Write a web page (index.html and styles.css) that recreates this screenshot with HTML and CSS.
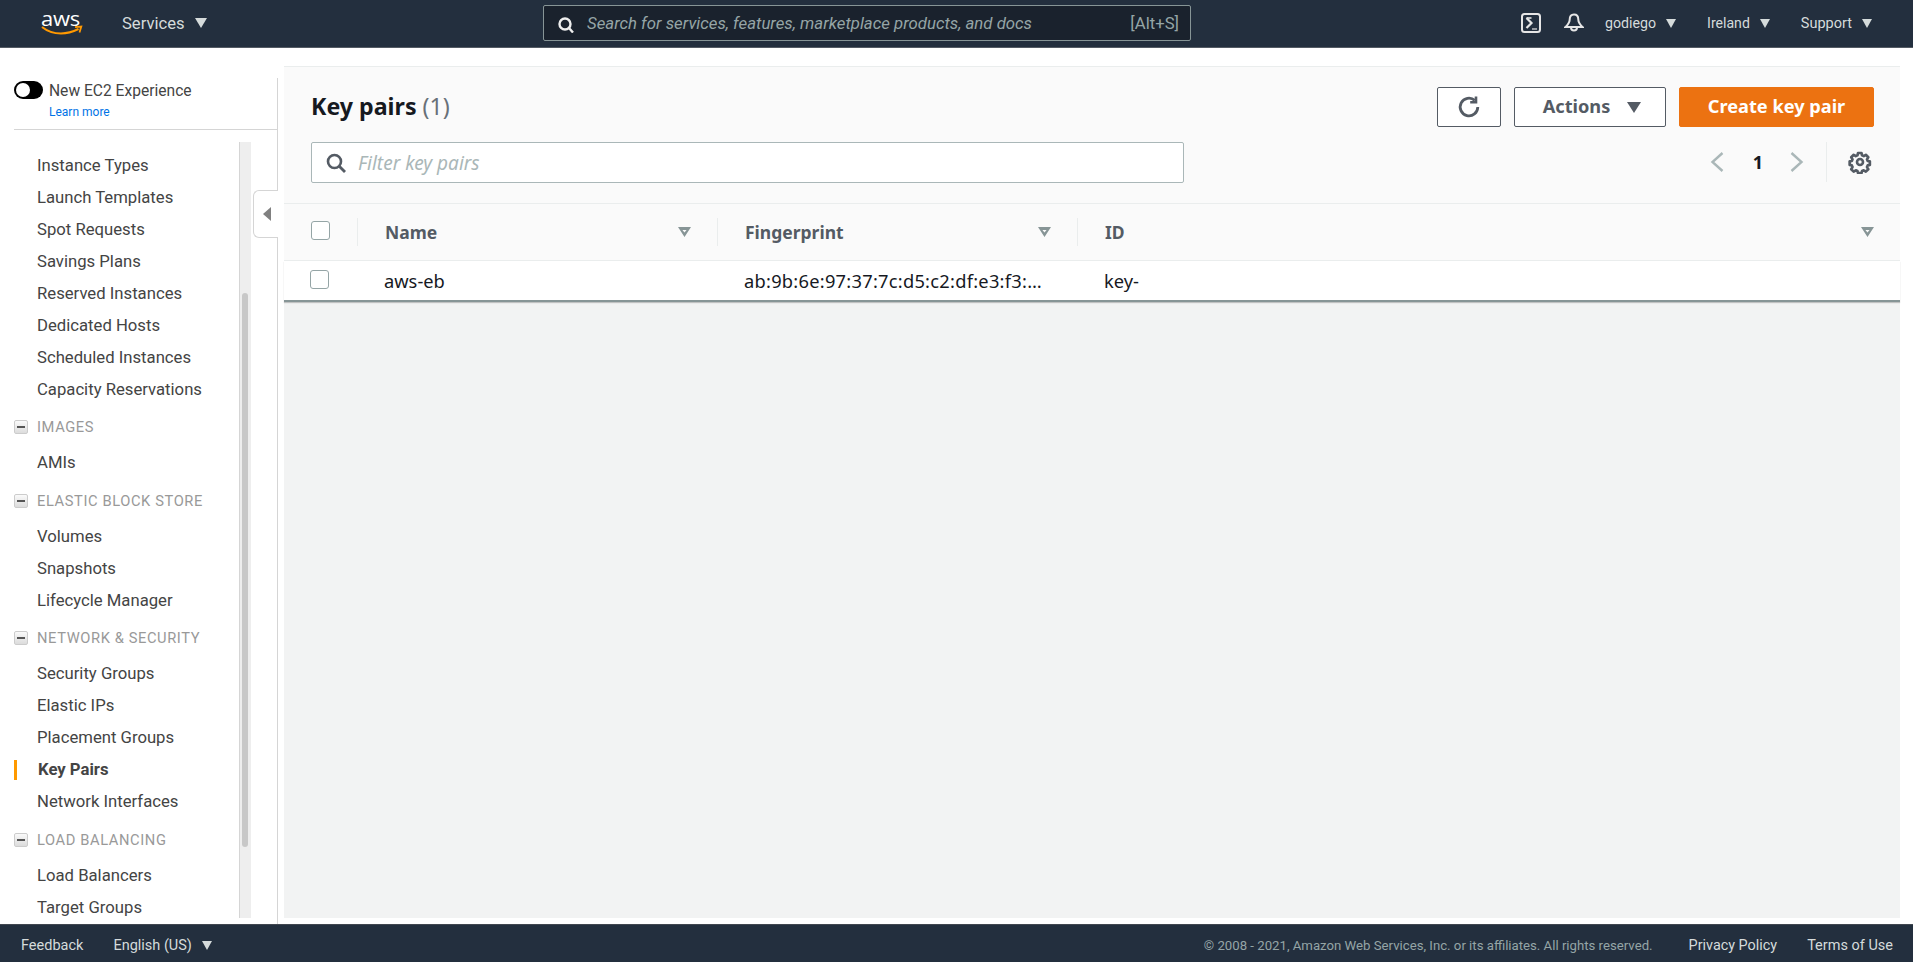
FILE: index.html
```html
<!DOCTYPE html>
<html lang="en">
<head>
<meta charset="utf-8">
<title>Key pairs | EC2 Management Console</title>
<link rel="stylesheet" href="styles.css">
</head>
<body>
<header class="topnav">
  <svg class="logo" viewBox="0 0 42 12" width="42" height="12"><path d="M1 2c5 4 11 6.500 19 6.500 6 0 12-1.800 17.500-4.500" fill="none" stroke="#f90" stroke-width="2"/><path d="M34 2.200l6.300-.7-1.800 6" fill="none" stroke="#f90" stroke-width="1.800"/></svg>
  <span class="logo-text">aws</span>
  <span class="nav-services">Services</span><i class="caret caret-lg"></i>
  <div class="omni">
    <svg class="omni-icon" viewBox="0 0 16 16" width="16" height="16"><circle cx="7" cy="7" r="5.500" fill="none" stroke="#eee" stroke-width="2.400"/><path d="M10.500 10.500L15 15.500" stroke="#eee" stroke-width="2.400"/></svg>
    <span class="omni-text">Search for services, features, marketplace products, and docs</span>
    <span class="omni-key">[Alt+S]</span>
  </div>
  <div class="nav-right">
    <svg class="nav-icon" viewBox="0 0 20 20" width="20" height="20"><rect x="1" y="1" width="18" height="18" rx="2.500" fill="none" stroke="#e6e6e6" stroke-width="2"/><path d="M5.500 5l5 5-5 5" fill="none" stroke="#e6e6e6" stroke-width="2.200"/><path d="M5.500 5h5" stroke="#e6e6e6" stroke-width="1.600"/><path d="M11 16h5" stroke="#e6e6e6" stroke-width="1.200"/></svg>
    <svg class="nav-icon bell" viewBox="0 0 20 20" width="20" height="20"><path d="M10 1.500c-3 0-4.300 2.500-4.300 5 0 3.500-1.700 5-4.200 7.500h17c-2.500-2.500-4.200-4-4.200-7.500 0-2.500-1.300-5-4.300-5z" fill="none" stroke="#e6e6e6" stroke-width="2"/><path d="M7 14.500a3 3 0 0 0 6 0" fill="none" stroke="#e6e6e6" stroke-width="2"/></svg>
    <span class="nav-item user">godiego</span><i class="caret"></i>
    <span class="nav-item region">Ireland</span><i class="caret"></i>
    <span class="nav-item support">Support</span><i class="caret"></i>
  </div>
</header>

<div class="body-row">
  <aside class="sidebar">
    <div class="exp">
      <span class="toggle"><span class="knob"></span></span>
      <div>
        <div class="exp-title">New EC2 Experience</div>
        <a class="exp-link">Learn more</a>
      </div>
    </div>
    <div class="side-scroll">
      <nav class="side-list">
        <a class="item">Instance Types</a>
        <a class="item">Launch Templates</a>
        <a class="item">Spot Requests</a>
        <a class="item">Savings Plans</a>
        <a class="item">Reserved Instances</a>
        <a class="item">Dedicated Hosts</a>
        <a class="item">Scheduled Instances</a>
        <a class="item">Capacity Reservations</a>
        <div class="group"><span class="minus"></span>IMAGES</div>
        <a class="item">AMIs</a>
        <div class="group"><span class="minus"></span>ELASTIC BLOCK STORE</div>
        <a class="item">Volumes</a>
        <a class="item">Snapshots</a>
        <a class="item">Lifecycle Manager</a>
        <div class="group"><span class="minus"></span>NETWORK &amp; SECURITY</div>
        <a class="item">Security Groups</a>
        <a class="item">Elastic IPs</a>
        <a class="item">Placement Groups</a>
        <a class="item active">Key Pairs</a>
        <a class="item">Network Interfaces</a>
        <div class="group"><span class="minus"></span>LOAD BALANCING</div>
        <a class="item">Load Balancers</a>
        <a class="item">Target Groups</a>
      </nav>
      <div class="track"><div class="thumb"></div></div>
    </div>
    <div class="collapse"><i class="collapse-arrow"></i></div>
  </aside>

  <main class="content">
    <section class="panel">
      <div class="panel-head">
        <div class="title-row">
          <h1 class="title">Key pairs <span class="count">(1)</span></h1>
          <div class="actions">
            <button class="btn btn-icon"><svg viewBox="0 0 24 24" width="24" height="24"><path d="M20.800 12a8.800 8.800 0 1 1-3-6.600" fill="none" stroke="#545b64" stroke-width="2.800"/><path d="M19 1.500v5.800h-5.800" fill="none" stroke="#545b64" stroke-width="2.600"/></svg></button>
            <button class="btn btn-actions">Actions<i class="caret-dark"></i></button>
            <button class="btn btn-primary">Create key pair</button>
          </div>
        </div>
        <div class="filter-row">
          <div class="filter">
            <svg viewBox="0 0 20 20" width="20" height="20"><circle cx="8.500" cy="8.500" r="6.500" fill="none" stroke="#545b64" stroke-width="2.600"/><path d="M13 13l6 6" stroke="#545b64" stroke-width="2.800"/></svg>
            <span class="filter-text">Filter key pairs</span>
          </div>
          <div class="pager">
            <svg class="chev" viewBox="0 0 14 20" width="14" height="20"><path d="M12.500 1L2.500 10l10 9" fill="none" stroke="#aab7b8" stroke-width="2.400"/></svg>
            <span class="page">1</span>
            <svg class="chev" viewBox="0 0 14 20" width="14" height="20"><path d="M1.500 1l10 9-10 9" fill="none" stroke="#aab7b8" stroke-width="2.400"/></svg>
            <span class="pager-sep"></span>
            <svg class="gear" viewBox="0 0 24 24" width="24" height="24"><circle cx="12" cy="12" r="3" fill="none" stroke="#545b64" stroke-width="2.600"/><path d="M10 2.500h4l.6 2.700 1.900.8 2.400-1.500 2.800 2.800-1.500 2.400.8 1.900 2.500.4v4l-2.500.6-.8 1.900 1.500 2.400-2.800 2.800-2.400-1.500-1.900.8-.6 2.300h-4l-.6-2.300-1.900-.8-2.400 1.500-2.800-2.800 1.500-2.400-.8-1.900-2.500-.6v-4l2.500-.4.8-1.900-1.500-2.400 2.800-2.800 2.400 1.500 1.900-.8z" fill="none" stroke="#545b64" stroke-width="3" stroke-linejoin="round" transform="translate(1.200 .8) scale(.88)"/></svg>
          </div>
        </div>
      </div>
      <div class="thead">
        <div class="cell-check"><span class="check"></span></div>
        <div class="th th-name">Name<i class="sort"></i></div>
        <div class="th th-fp">Fingerprint<i class="sort"></i></div>
        <div class="th th-id">ID<i class="sort"></i></div>
      </div>
      <div class="trow">
        <div class="cell-check row-check"><span class="check"></span></div>
        <div class="td td-name">aws-eb</div>
        <div class="td td-fp">ab:9b:6e:97:37:7c:d5:c2:df:e3:f3:…</div>
        <div class="td td-id">key-</div>
      </div>
    </section>
  </main>
</div>

<footer class="footer">
  <span class="foot-link feedback">Feedback</span>
  <span class="foot-link lang">English (US)</span><i class="caret"></i>
  <div class="foot-right">
    <span class="copy">© 2008 - 2021, Amazon Web Services, Inc. or its affiliates. All rights reserved.</span>
    <span class="foot-link privacy">Privacy Policy</span>
    <span class="foot-link terms">Terms of Use</span>
  </div>
</footer>
</body>
</html>
```
FILE: styles.css
```css
* { box-sizing: border-box; }
html, body { margin: 0; height: 100%; }
body { width: 1913px; height: 962px; overflow: hidden; display: flex; flex-direction: column; background: #fff; font-family: Roboto, sans-serif; }
i { display: inline-block; font-style: normal; }

.topnav { height: 48px; flex: none; background: #232f3e; border-bottom: 1px solid #545b64; display: flex; align-items: center; position: relative; color: #d5dbdb; font-size: 14.500px; }
.logo { position: absolute; left: 41px; top: 25px; }
.logo-text { position: absolute; left: 41px; top: 3px; font: 500 22px/30px "Open Sans", sans-serif; color: #fff; letter-spacing: -.3px; transform: scaleY(.9); }
.nav-services { margin-left: 122px; padding-bottom: 1px; font-size: 16.600px; color: #d5dbdb; }
.caret { width: 0; height: 0; border-left: 5.500px solid transparent; border-right: 5.500px solid transparent; border-top: 9px solid #d5dbdb; margin-left: 10px; }
.caret-lg { border-left-width: 6px; border-right-width: 6px; border-top-width: 10px; margin-bottom: 2px; }
.omni { position: absolute; left: 543px; top: 5px; width: 648px; height: 36px; background: #1a222d; border: 1px solid #879596; border-radius: 2px; display: flex; align-items: center; padding: 0 11px 0 14px; }
.omni-icon { margin-top: 4px; }
.omni-text { margin-left: 13px; font-size: 16.800px; font-style: italic; color: #95a5a6; flex: 1; }
.omni-key { font-size: 16.700px; color: #95a5a6; }
.nav-right { margin-left: auto; display: flex; align-items: center; padding-right: 41px; padding-bottom: 1px; }
.nav-icon { margin-right: 23px; }
.bell { margin-right: 21px; }
.nav-item { color: #d5dbdb; }
.user { font-size: 14.200px; }
.region { margin-left: 31px; font-size: 14.100px; }
.support { margin-left: 31px; }

.body-row { flex: 1; min-height: 0; display: flex; }

.sidebar { width: 284px; flex: none; position: relative; padding: 30px 6px 0 14px; display: flex; flex-direction: column; }
.sidebar::after { content: ""; position: absolute; left: 277px; top: 30px; bottom: 0; width: 1px; background: #d5d5d5; }
.exp { height: 52px; border-bottom: 1px solid #d5d5d5; display: flex; gap: 6px; }
.toggle { width: 29px; height: 18px; margin-top: 3px; background: #000; border-radius: 9px; position: relative; flex: none; }
.knob { position: absolute; left: 2px; top: 2px; width: 14px; height: 14px; background: #fff; border-radius: 50%; }
.exp-title { font-size: 15.600px; line-height: 20px; color: #444; margin-top: 3px; }
.exp-link { display: block; font-size: 12px; line-height: 14px; margin-top: 4px; color: #0073e6; }
.side-scroll { flex: 1; min-height: 0; display: flex; margin-right: 27px; overflow: hidden; position: relative; padding-top: 19.500px; }
.side-list { flex: 1; display: flex; flex-direction: column; }
.item { display: block; height: 32px; line-height: 32px; padding-left: 23px; font-size: 16.700px; color: #444; flex: none; }
.item.active { font-weight: 700; position: relative; padding-left: 24px; }
.item.active::before { content: ""; position: absolute; left: 0; top: 6px; width: 3px; height: 20px; background: #f90; }
.group { height: 41.600px; flex: none; display: flex; align-items: center; padding-top: 2px; color: #999; font-size: 14.700px; letter-spacing: .6px; }
.minus { width: 14px; height: 14px; margin-right: 9px; background: linear-gradient(#fafafa, #dcdcdc); border: 1px solid #ccc; border-radius: 2px; position: relative; flex: none; }
.minus::after { content: ""; position: absolute; left: 2px; top: 5px; width: 8px; height: 2px; background: #555; }
.track { position: absolute; right: 0; top: 12px; bottom: 6px; width: 12px; background: #eeeeee; border-left: 1px solid #d5d5d5; }
.thumb { position: absolute; left: 2px; top: 151px; width: 6px; height: 554px; background: #c8c8c8; border-radius: 3px; }
.collapse { position: absolute; left: 253px; top: 142px; width: 25px; height: 48px; background: #fff; border: 1px solid #d5d5d5; border-right: 0; border-radius: 6px 0 0 6px; display: flex; align-items: center; justify-content: center; padding-left: 2px; z-index: 2; }
.collapse-arrow { width: 0; height: 0; border-top: 7px solid transparent; border-bottom: 7px solid transparent; border-right: 8px solid #808080; }

.content { flex: 1; padding: 18px 13px 6px 0; min-width: 0; }
.panel { height: 100%; background: #f2f3f3; border-top: 1px solid #eaeded; font-family: "Noto Sans", sans-serif; }
.panel-head { height: 137px; background: #fafafa; padding: 20px 26px 0 27px; border-bottom: 1px solid #eaeded; }
.title-row { display: flex; justify-content: space-between; align-items: flex-start; }
.title { margin: 6px 0 0; font-size: 23.200px; line-height: 26px; font-weight: 700; color: #16191f; }
.count { font-weight: 400; color: #687078; }
.actions { display: flex; gap: 13px; }
.btn { height: 40px; border: 1px solid #545b64; border-radius: 2px; background: #fff; font-family: "Noto Sans", sans-serif; font-size: 18.200px; font-weight: 700; line-height: 36px; color: #545b64; display: flex; align-items: center; justify-content: center; padding: 0 0 2px; }
.btn-icon { width: 64px; padding: 0; }
.btn-actions { width: 152px; gap: 17px; padding-left: 4px; }
.caret-dark { width: 0; height: 0; border-left: 7px solid transparent; border-right: 7px solid transparent; border-top: 11px solid #545b64; margin-top: 2px; }
.btn-primary { width: 195px; background: #ec7211; border-color: #ec7211; color: #fff; }
.filter-row { display: flex; justify-content: space-between; margin-top: 15px; }
.filter { width: 873px; height: 41px; background: #fff; border: 1px solid #aab7b8; border-radius: 2px; display: flex; align-items: center; padding-left: 14px; gap: 12px; }
.filter-text { font-size: 19px; font-style: italic; color: #aab7b8; }
.pager { display: flex; align-items: center; height: 40px; padding-right: 2px; }
.page { width: 66px; padding-left: 2px; text-align: center; font-size: 18px; font-weight: 700; color: #16191f; }
.pager-sep { width: 1px; height: 40px; background: #eaeded; margin: 0 21px 0 22px; }

.thead { height: 57px; background: #fafafa; border-bottom: 1px solid #eaeded; display: flex; align-items: center; }
.cell-check { width: 73px; padding-left: 27px; flex: none; display: flex; }
.check { width: 19px; height: 19px; background: #fff; border: 1px solid #95a5a6; border-radius: 3px; }
.thead .cell-check { height: 28px; align-items: flex-start; }
.thead .check { margin-top: 3px; }
.th { font-size: 17.500px; font-weight: 700; color: #545b64; height: 28px; line-height: 28px; border-left: 1px solid #eaeded; padding-left: 27px; display: flex; justify-content: space-between; padding-right: 26px; position: relative; }
.th-name { width: 360px; }
.th-fp { width: 360px; }
.th-id { flex: 1; }
.sort { width: 13px; height: 10px; margin-top: 9px; background: #879596; clip-path: polygon(evenodd, 0 0, 100% 0, 50% 100%, 0 0, 34% 30%, 66% 30%, 50% 56%, 34% 30%); }
.trow { height: 41px; background: #fff; border-bottom: 2px solid #879596; box-shadow: 0 1px 1px rgba(0,0,0,.2); display: flex; align-items: center; }
.row-check { width: 74px; padding-left: 26px; margin-top: -2px; }
.td { font-size: 18.300px; color: #16191f; line-height: 24px; padding-top: 1px; }
.td-name { width: 360px; padding-left: 26px; }
.td-fp { width: 360px; padding-left: 26px; letter-spacing: .25px; white-space: nowrap; }
.td-id { padding-left: 26px; }

.footer { height: 38px; flex: none; background: #232f3e; border-top: 1px solid #414750; display: flex; align-items: center; color: #d5dbdb; font-size: 14.500px; padding: 3px 20px 0 21px; }
.lang { margin-left: 30px; }
.foot-right { margin-left: auto; display: flex; align-items: center; }
.copy { color: #95a5a6; font-size: 13.200px; }
.privacy { margin-left: 36px; font-size: 14.400px; }
.terms { margin-left: 30px; }
```
